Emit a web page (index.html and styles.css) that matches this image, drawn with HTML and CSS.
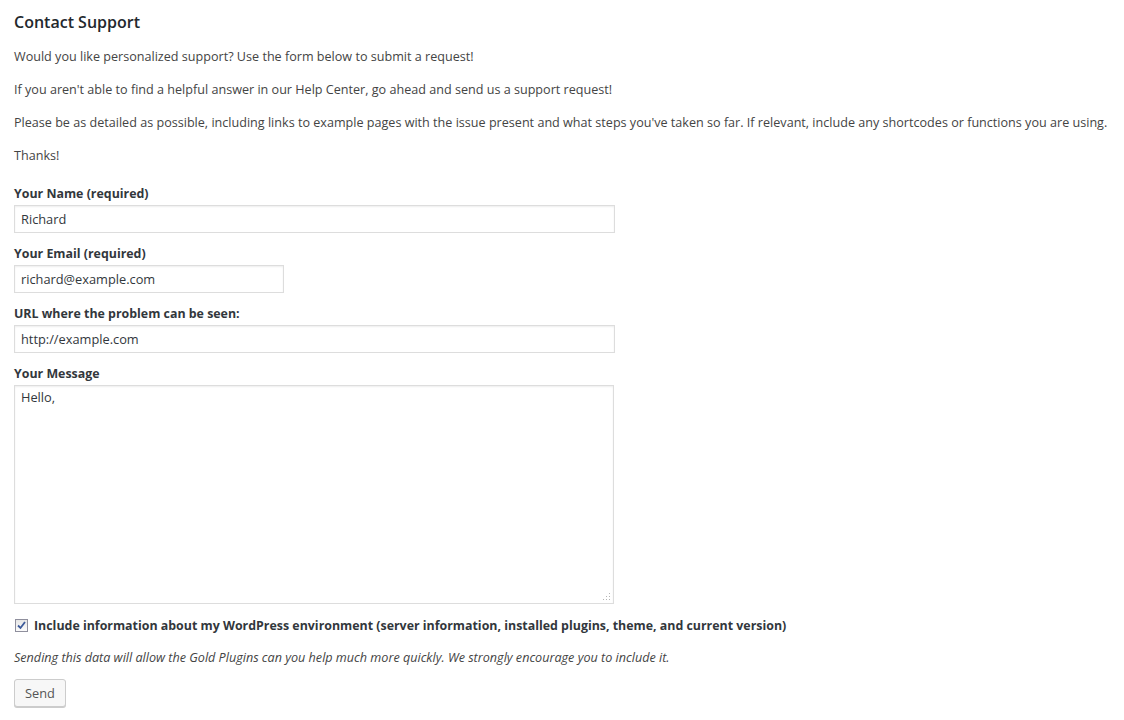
FILE: index.html
```html
<!DOCTYPE html>
<html lang="en">
<head>
<meta charset="utf-8">
<title>Contact Support</title>
<link rel="stylesheet" href="styles.css">
</head>
<body>
<div class="wrap">
  <h3 class="title">Contact Support</h3>
  <p class="intro">Would you like personalized support? Use the form below to submit a request!</p>
  <p class="intro">If you aren't able to find a helpful answer in our Help Center, go ahead and send us a support request!</p>
  <p class="intro">Please be as detailed as possible, including links to example pages with the issue present and what steps you've taken so far. If relevant, include any shortcodes or functions you are using.</p>
  <p class="intro last">Thanks!</p>

  <form class="form">
    <div class="field">
      <label class="lbl" for="name">Your Name (required)</label>
      <input class="txt wide" id="name" type="text" value="Richard">
    </div>
    <div class="field">
      <label class="lbl" for="email">Your Email (required)</label>
      <input class="txt short" id="email" type="text" value="richard@example.com">
    </div>
    <div class="field">
      <label class="lbl" for="url">URL where the problem can be seen:</label>
      <input class="txt wide" id="url" type="text" value="http://example.com">
    </div>
    <div class="field msg-field">
      <label class="lbl" for="msg">Your Message</label>
      <div class="ta-wrap">
        <textarea class="ta" id="msg">Hello,</textarea>
        <svg class="grip" width="8" height="8" viewBox="0 0 8 8" aria-hidden="true">
          <rect x="6" y="0" width="1" height="1" fill="#b5b5b5"/>
          <rect x="6" y="3" width="1" height="1" fill="#b5b5b5"/>
          <rect x="3" y="3" width="1" height="1" fill="#b5b5b5"/>
          <rect x="6" y="6" width="1" height="1" fill="#b5b5b5"/>
          <rect x="3" y="6" width="1" height="1" fill="#b5b5b5"/>
          <rect x="0" y="6" width="1" height="1" fill="#b5b5b5"/>
        </svg>
      </div>
    </div>
    <div class="check-row">
      <span class="cbox">
        <svg width="9" height="9" viewBox="0 0 9 9" aria-hidden="true">
          <path d="M1 4.5 L3.5 7 L8 1" fill="none" stroke="#3c5a9a" stroke-width="1.8"/>
        </svg>
      </span>
      <span class="check-lbl">Include information about my WordPress environment (server information, installed plugins, theme, and current version)</span>
    </div>
    <p class="note">Sending this data will allow the Gold Plugins can you help much more quickly. We strongly encourage you to include it.</p>
    <button class="btn" type="button">Send</button>
  </form>
</div>
</body>
</html>
```

FILE: styles.css
```css
html, body {
  margin: 0;
  padding: 0;
  background: #fff;
}

body {
  font-family: "Open Sans", "DejaVu Sans", sans-serif;
  font-size: 12.6px;
  color: #444;
}

.wrap {
  padding: 11px 14px;
}

.title {
  margin: 0 0 14px;
  font-size: 16px;
  line-height: 22px;
  font-weight: 600;
  color: #23282d;
}

.intro {
  margin: 0 0 14px;
  line-height: 19px;
  white-space: nowrap;
}

.intro.last {
  margin-bottom: 19px;
}

.form {
  display: flex;
  flex-direction: column;
  align-items: flex-start;
}

.field {
  display: flex;
  flex-direction: column;
  align-items: flex-start;
  margin-bottom: 11px;
}

.msg-field {
  margin-bottom: 12px;
}

.lbl {
  font-weight: 700;
  font-size: 12.4px;
  line-height: 19px;
  color: #32373c;
  margin-bottom: 2px;
}

.txt {
  box-sizing: border-box;
  height: 28px;
  margin: 0;
  padding: 3px 6px;
  border: 1px solid #ddd;
  box-shadow: inset 0 1px 2px rgba(0, 0, 0, 0.07);
  background: #fff;
  font-family: inherit;
  font-size: 12.8px;
  color: #32373c;
  outline: none;
}

.wide {
  width: 601px;
}

.short {
  width: 270px;
}

.ta-wrap {
  position: relative;
  width: 600px;
  height: 219px;
}

.ta {
  box-sizing: border-box;
  width: 600px;
  height: 219px;
  margin: 0;
  padding: 2px 6px;
  border: 1px solid #ddd;
  box-shadow: inset 0 1px 2px rgba(0, 0, 0, 0.07);
  font-family: inherit;
  font-size: 12.8px;
  line-height: 19px;
  color: #32373c;
  resize: none;
  outline: none;
  display: block;
}

.grip {
  position: absolute;
  right: 3px;
  bottom: 3px;
}

.check-row {
  display: flex;
  align-items: center;
  gap: 6px;
  line-height: 19px;
  margin-bottom: 13px;
}

.cbox {
  box-sizing: border-box;
  width: 13px;
  height: 13px;
  margin-left: 1px;
  border: 1px solid #8f8f9d;
  background: linear-gradient(#e6e6e6, #fbfbfb);
  display: flex;
  align-items: center;
  justify-content: center;
}

.cbox svg {
  display: block;
}

.check-lbl {
  font-weight: 700;
  font-size: 12.4px;
  color: #32373c;
}

.note {
  margin: 0 0 12px;
  line-height: 19px;
  font-style: italic;
}

.btn {
  box-sizing: border-box;
  height: 28px;
  padding: 0 10px 1px;
  border: 1px solid #ccc;
  border-radius: 3px;
  background: #f7f7f7;
  box-shadow: 0 1px 0 #ccc;
  font-family: inherit;
  font-size: 12.8px;
  color: #555;
  cursor: pointer;
}
```
